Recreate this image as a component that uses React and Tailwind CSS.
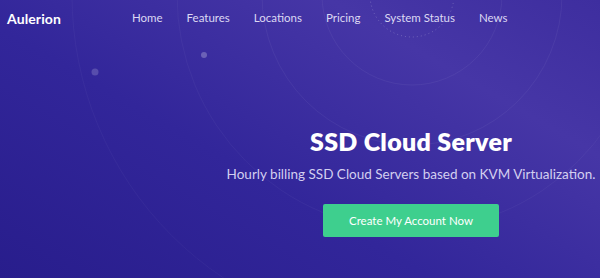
import React from 'react';

const NAV = ['Home', 'Features', 'Locations', 'Pricing', 'System Status', 'News'];

function Backdrop() {
  // decorative rings and dots behind the hero
  return (
    <svg className="absolute inset-0 pointer-events-none" width="600" height="278" viewBox="0 0 600 278">
      <circle cx="412" cy="-5" r="42" fill="none" stroke="rgba(255,255,255,0.22)" strokeWidth="1" strokeDasharray="1 3" />
      <circle cx="412" cy="-5" r="90" fill="none" stroke="rgba(255,255,255,0.05)" strokeWidth="1" />
      <circle cx="412" cy="-5" r="150" fill="none" stroke="rgba(255,255,255,0.05)" strokeWidth="1" />
      <circle cx="412" cy="-5" r="235" fill="none" stroke="rgba(255,255,255,0.04)" strokeWidth="1" />
      <circle cx="412" cy="-5" r="340" fill="none" stroke="rgba(255,255,255,0.035)" strokeWidth="1" />
      <circle cx="95" cy="72" r="3.5" fill="rgba(255,255,255,0.18)" />
      <circle cx="204" cy="55" r="3" fill="rgba(255,255,255,0.25)" />
    </svg>
  );
}

export default function App() {
  return (
    <div
      className="relative w-[600px] h-[278px] overflow-hidden bg-[linear-gradient(30deg,#281d8c_0%,#32269a_40%,#4636a6_75%,#3e2e9f_100%)]"
      style={{ fontFamily: 'Lato, "Open Sans", sans-serif' }}
    >
      <Backdrop />

      {/* Header */}
      <header className="relative flex items-center h-[36px] pl-[7px]">
        <span className="text-white font-bold text-[14px] tracking-[0.1px]">Aulerion</span>
        <nav className="flex items-center gap-[24px] ml-[71px]">
          {NAV.map(item => (
            <a key={item} className="text-[11.5px] text-[#dcd8f3]">{item}</a>
          ))}
        </nav>
      </header>

      {/* Hero */}
      <section className="relative flex">
        <div className="w-[222px] shrink-0" />
        <div className="flex-1 flex flex-col items-center pt-[90px]">
          <h1 className="text-white font-extrabold text-[25px] leading-[30px] tracking-[0.3px]">SSD Cloud Server</h1>
          <p className="mt-[8px] text-[13.5px] text-[#d3cff0] whitespace-nowrap">
            Hourly billing SSD Cloud Servers based on KVM Virtualization.
          </p>
          <button className="mt-[20px] w-[176px] h-[33px] rounded-[2px] bg-[#3ecf8e] text-white text-[11.5px]">
            Create My Account Now
          </button>
        </div>
      </section>
    </div>
  );
}
